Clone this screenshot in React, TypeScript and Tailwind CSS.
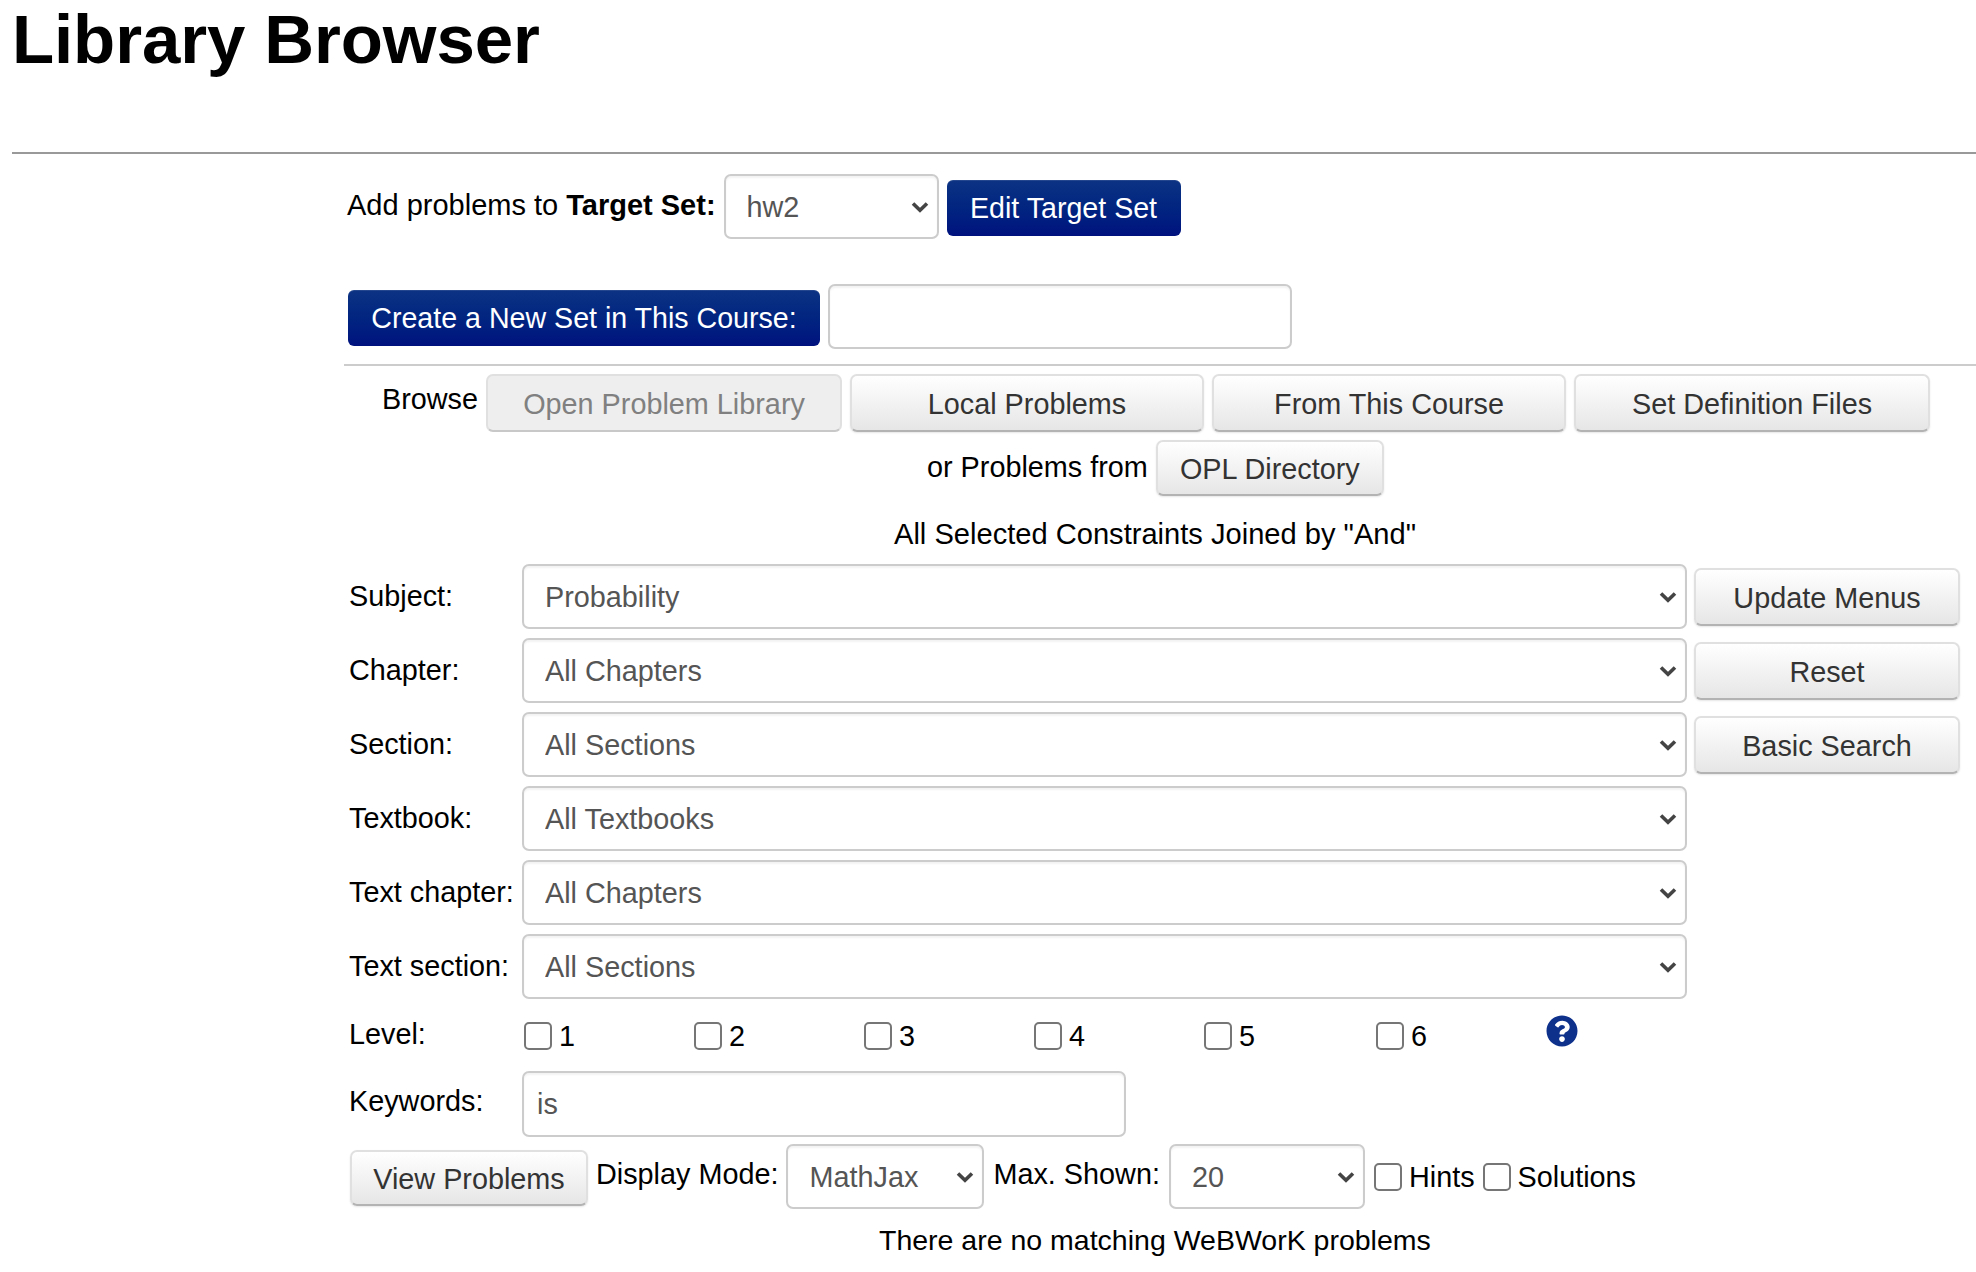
import React from "react";
import { FaQuestionCircle } from "react-icons/fa";

const FONT = "font-['Liberation_Sans',Arial,sans-serif]";

function Chevron() {
  return (
    <svg viewBox="0 0 18 12" className="absolute right-[10px] top-1/2 h-[12px] w-[18px] -translate-y-1/2 pointer-events-none" fill="none" stroke="#444444" strokeWidth="3.6">
      <path d="M2 2.500 L9 9.300 L16 2.500" />
    </svg>
  );
}

function Select({ value, className }: { value: string; className: string }) {
  return (
    <div className={"relative shrink-0 h-[65px] " + className}>
      <select
        defaultValue={value}
        className="h-full w-full appearance-none rounded-[7px] border-2 border-[#cccccc] bg-white pl-[21px] pr-8 pt-[3px] text-[28.8px] text-[#555555] font-['Liberation_Sans',Arial,sans-serif] outline-none shadow-[inset_0_2px_2px_rgba(0,0,0,0.05)]"
      >
        <option>{value}</option>
      </select>
      <Chevron />
    </div>
  );
}

function Btn({ children, className, disabled }: { children: React.ReactNode; className: string; disabled?: boolean }) {
  return (
    <button
      type="button"
      className={
        "shrink-0 rounded-[7px] border-2 border-[#e0e0e0] pt-[3px] text-[28.8px] " +
        (disabled
          ? "bg-[#eeeeee] text-[#808080] border-b-[#c8c8c8] "
          : "bg-gradient-to-b from-white to-[#e6e6e6] text-[#333333] border-b-[#b3b3b3] shadow-[0_1px_2px_rgba(0,0,0,0.1)] ") +
        className
      }
    >
      {children}
    </button>
  );
}

function Primary({ children, className }: { children: React.ReactNode; className: string }) {
  return (
    <button type="button" className={"h-[56px] shrink-0 rounded-[6px] bg-gradient-to-b from-[#0c3383] to-[#00117e] pt-[1px] text-[28.6px] text-white shadow-[inset_0_1px_0_rgba(255,255,255,0.1)] " + className}>
      {children}
    </button>
  );
}

function Check({ label, className }: { label: string; className: string }) {
  return (
    <label className={"flex items-center " + className}>
      <span className="block h-[28px] w-[28px] shrink-0 rounded-[5px] border-2 border-[#767676] bg-white" />
      <span className="ml-[7px] text-[28.8px] leading-[32px] text-black">{label}</span>
    </label>
  );
}

const rows: { label: string; value: string; button?: string }[] = [
  { label: "Subject:", value: "Probability", button: "Update Menus" },
  { label: "Chapter:", value: "All Chapters", button: "Reset" },
  { label: "Section:", value: "All Sections", button: "Basic Search" },
  { label: "Textbook:", value: "All Textbooks" },
  { label: "Text chapter:", value: "All Chapters" },
  { label: "Text section:", value: "All Sections" },
];

export default function App() {
  return (
    <div className={"h-[1272px] w-[1976px] overflow-hidden bg-white text-black " + FONT}>
      <div className="pl-[12px]">
        <h1 className="h-[152px] text-[69px] font-bold leading-[80px] tracking-[-0.1px]">Library Browser</h1>
        <div className="h-[2px] bg-[#999999]" />
      </div>
      <div className="ml-[344px] text-[28.8px]">
        <div className="flex h-[105px] items-start pl-[3px] pt-[20px]">
          <span className="mr-[8px] mt-[15px] text-[29px] leading-[32px]">
            Add problems to <b>Target Set:</b>
          </span>
          <Select value="hw2" className="w-[215px]" />
          <Primary className="ml-[8px] mt-[6px] w-[234px]">Edit Target Set</Primary>
        </div>
        <div className="flex h-[105px] items-start pl-[4px] pt-[25px]">
          <Primary className="mt-[6px] w-[472px]">Create a New Set in This Course:</Primary>
          <input className="ml-[8px] h-[65px] w-[464px] rounded-[7px] border-2 border-[#cccccc] bg-white shadow-[inset_0_2px_2px_rgba(0,0,0,0.05)]" />
        </div>
        <div className="h-[2px] bg-[#cccccc]" />
        <div className="flex items-start pt-[8px]">
          <span className="ml-[38px] mr-[8px] mt-[9px] leading-[32px]">Browse</span>
          <Btn disabled className="h-[58px] w-[356px]">Open Problem Library</Btn>
          <Btn className="ml-[8px] h-[58px] w-[354px]">Local Problems</Btn>
          <Btn className="ml-[8px] h-[58px] w-[354px]">From This Course</Btn>
          <Btn className="ml-[8px] h-[58px] w-[356px]">Set Definition Files</Btn>
        </div>
        <div className="flex items-start pl-[583px] pt-[8px]">
          <span className="mr-[8px] mt-[11px] leading-[32px]">or Problems from</span>
          <Btn className="h-[56px] w-[228px]">OPL Directory</Btn>
        </div>
        <div className="mt-[22px] pl-[550px] text-[29.1px] leading-[32px]">All Selected Constraints Joined by "And"</div>
        <div className="mt-[14px] flex flex-col gap-[9px] pl-[5px]">
          {rows.map((r) => (
            <div key={r.label} className="flex h-[65px] items-start">
              <span className="mt-[16px] w-[173px] shrink-0 whitespace-nowrap leading-[32px]">{r.label}</span>
              <Select value={r.value} className="w-[1165px]" />
              {r.button && <Btn className="ml-[7px] mt-[4px] h-[58px] w-[266px]">{r.button}</Btn>}
            </div>
          ))}
        </div>
        <div className="flex h-[72px] items-start pl-[5px] pt-[9px]">
          <span className="mt-[10px] w-[175px] shrink-0 leading-[32px]">Level:</span>
          <div className="relative mt-[8px] flex h-[40px] items-center">
            {["1", "2", "3", "4", "5"].map((n) => (
              <Check key={n} label={n} className="w-[170px]" />
            ))}
            <Check label="6" className="ml-[2px] w-[170px]" />
            <FaQuestionCircle className="h-[32px] w-[32px] -translate-y-[5px] text-[#0e318c]" />
          </div>
        </div>
        <div className="flex h-[66px] items-start pl-[5px]">
          <span className="mt-[14px] w-[173px] shrink-0 leading-[32px]">Keywords:</span>
          <input defaultValue="is" className="h-[66px] w-[604px] rounded-[7px] border-2 border-[#cccccc] bg-white pl-[13px] text-[28.8px] text-[#555555] shadow-[inset_0_2px_2px_rgba(0,0,0,0.05)]" />
        </div>
        <div className="mt-[7px] flex h-[65px] items-start pl-[6px]">
          <Btn className="mt-[6px] h-[56px] w-[238px]">View Problems</Btn>
          <span className="ml-[8px] mr-[8px] mt-[14px] whitespace-nowrap leading-[32px]">Display Mode:</span>
          <Select value="MathJax" className="w-[198px]" />
          <span className="ml-[9px] mr-[9px] mt-[14px] whitespace-nowrap leading-[32px]">Max. Shown:</span>
          <Select value="20" className="w-[196px]" />
          <Check label="Hints" className="ml-[9px] mt-[17px]" />
          <Check label="Solutions" className="ml-[8px] mt-[17px]" />
        </div>
        <div className="mt-[15px] pl-[535px] text-[28.5px] leading-[32px]">There are no matching WeBWorK problems</div>
      </div>
    </div>
  );
}
